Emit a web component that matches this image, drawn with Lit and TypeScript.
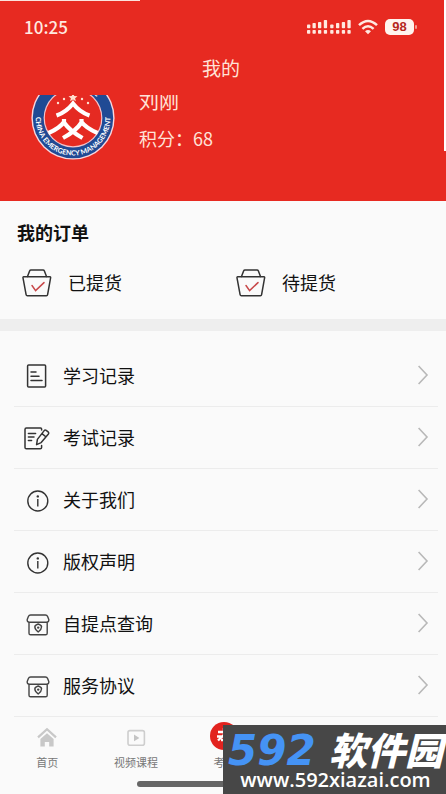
import { LitElement, html, css, svg } from "lit";
import { customElement } from "lit/decorators.js";

const basket = svg`<svg class="basket" viewBox="0 0 30 30" aria-hidden="true">
  <g fill="none" stroke="#333" stroke-width="1.5" stroke-linejoin="round" stroke-linecap="round">
    <path d="M5.5 8.5 L7.6 3 Q8 2 9 2 H21 Q22 2 22.4 3 L24.5 8.5"/>
    <path d="M1.6 8.8 H28 Q28.8 8.8 28.6 9.8 L25.6 26.6 Q25.4 27.8 24.4 27.8 H5.4 Q4.3 27.8 4.1 26.6 L1 9.8 Q.9 8.8 1.6 8.8Z"/>
  </g>
  <path d="M10 17.5 L13.6 22.6 L22 14.6" fill="none" stroke="#c8484a" stroke-width="1.5" stroke-linecap="round"/>
</svg>`;

const icons = {
  doc: svg`<svg class="icon" viewBox="0 0 28 28" aria-hidden="true"><g fill="none" stroke="#333" stroke-width="1.5" stroke-linecap="round" stroke-linejoin="round">
    <rect x="3.6" y="3" width="18" height="22" rx="1"/><path d="M7 10H12M7 14.2H15M7 18.6H18"/></g></svg>`,
  exam: svg`<svg class="icon" viewBox="0 0 28 28" aria-hidden="true"><g fill="none" stroke="#333" stroke-width="1.5" stroke-linecap="round" stroke-linejoin="round">
    <path d="M17.6 6 V5 Q17.6 4 16.6 4 H2.4 Q1 4 1 5.4 V23.4 Q1 24.8 2.4 24.8 H16.2 Q17.6 24.8 17.6 23.4 V21.6"/>
    <path d="M4.4 9.4H11.6M4.4 13H10M4.4 16.4H7.6"/>
    <path d="M12.6 20.6 L13.4 15.4 L20.2 6.6 Q21 5.6 22.2 6.4 L24.4 8.2 Q25.2 9 24.4 10 L17.2 18.6 Z M18 9.6 L21.8 12.8"/></g></svg>`,
  info: svg`<svg class="icon" viewBox="0 0 28 28" aria-hidden="true"><g fill="none" stroke="#333" stroke-width="1.4">
    <circle cx="13.8" cy="15" r="10"/><path d="M13.8 13V20.4"/></g><circle cx="13.8" cy="10.4" r="1.2" fill="#333"/></svg>`,
  shop: svg`<svg class="icon" viewBox="0 0 28 28" aria-hidden="true"><g fill="none" stroke="#444" stroke-width="1.4" stroke-linejoin="round">
    <path d="M6.6 5 H21.4 Q23 5 23.6 6.6 L24.8 9.6 Q25 12.2 22.6 12.2 H5.4 Q3 12.2 3.2 9.6 L4.4 6.6 Q5 5 6.6 5Z"/>
    <path d="M5 12.2 V23.2 Q5 24.8 6.6 24.8 H21.6 Q23.2 24.8 23.2 23.2 V12.2"/>
    <path d="M14.2 22 Q10.8 19.4 10.8 16.8 Q11 15 14.2 14 Q17.4 15 17.6 16.8 Q17.6 19.4 14.2 22Z"/></g><circle cx="14.2" cy="17.6" r="1.2" fill="#444"/></svg>`,
};

const rows: { label: string; icon: keyof typeof icons }[] = [
  { label: "学习记录", icon: "doc" },
  { label: "考试记录", icon: "exam" },
  { label: "关于我们", icon: "info" },
  { label: "版权声明", icon: "info" },
  { label: "自提点查询", icon: "shop" },
  { label: "服务协议", icon: "shop" },
];

@customElement("status-bar")
class StatusBar extends LitElement {
  static styles = css`
    :host { display: flex; align-items: center; justify-content: space-between; height: 20px; padding: 17px 32px 0 24px; color: #ffe9e0; }
    .time { font-size: 17px; line-height: 20px; font-weight: 500; }
    .right { display: flex; align-items: center; gap: 7px; }
    .signal { width: 44px; height: 16px; }
    .wifi { width: 20px; height: 16px; }
    .battery { position: relative; width: 29px; height: 16px; border-radius: 5px; background: #fff4ee; color: #b5271c;
      font: bold 13px/16px "Liberation Sans", sans-serif; text-align: center; }
    .battery::after { content: ""; position: absolute; right: -3px; top: 6px; width: 2px; height: 4px; border-radius: 1px; background: #f39a8e; }
  `;
  render() {
    const tops = [5.4, 4, 3, 1, 5.4, 4, 3, 1];
    const xs = [0, 5.5, 11, 16.8, 23.2, 29, 34.8, 40.4];
    return html`
      <span class="time">10:25</span>
      <div class="right">
        <svg class="signal" viewBox="0 0 44 16" fill="#ffe9e0" aria-hidden="true">
          ${xs.map((x, i) => svg`<rect x=${x} y=${tops[i]} width="3.3" height=${9.2 - tops[i]} rx=".8"/><rect x=${x} y="11" width="3.3" height="3.8" rx=".8"/>`)}
        </svg>
        <svg class="wifi" viewBox="0 0 20 16" fill="none" stroke="#ffe9e0" stroke-width="2.5" aria-hidden="true">
          <path d="M1 6.2 Q10 -2.2 19 6.2"/><path d="M4.4 9.8 Q10 4.6 15.6 9.8"/><path d="M7 12.2 Q10 9.6 13 12.2 L10 15.2Z" fill="#ffe9e0" stroke="none"/>
        </svg>
        <span class="battery">98</span>
      </div>`;
  }
}

@customElement("user-badge")
class UserBadge extends LitElement {
  static styles = css`
    :host { display: block; width: 84px; height: 65px; }
    .badge { display: block; width: 100%; height: 100%; }
    .latin { font: bold 7px "Lato", sans-serif; fill: #fff; }
    .han { font: bold 9px "Noto Sans CJK SC", sans-serif; fill: #fff; }
  `;
  render() {
    return html`<svg class="badge" viewBox="0 19 84 65" role="img" aria-label="CHINA EMERGENCY MANAGEMENT">
      <circle cx="42" cy="42" r="41.6" fill="#f7d8e0"/>
      <circle cx="42" cy="42" r="40.2" fill="#204a94"/>
      <circle cx="42" cy="42" r="29.4" fill="#f3c4cc"/>
      <circle cx="42" cy="42" r="28.2" fill="#e52a22"/>
      <path id="low" d="M5.4 35 A37.3 37.3 0 1 0 78.6 35" fill="none"/>
      <path id="high" d="M10 42 A32 32 0 0 1 74 42" fill="none"/>
      <text class="latin" text-anchor="middle"><textPath href="#low" startOffset="50%">CHINA EMERGENCY MANAGEMENT</textPath></text>
      <text class="han" text-anchor="middle"><textPath href="#high" startOffset="50%">中国应急管理</textPath></text>
      <g fill="#ffe0d0">
        <path d="M42 17 l1.3 3 3.2 .2 -2.4 2 .8 3 -2.9-1.7 -2.9 1.7 .8-3 -2.4-2 3.2-.2z"/>
        <circle cx="33" cy="23" r="1.2"/><circle cx="51" cy="23" r="1.2"/><circle cx="27" cy="27" r="1.2"/><circle cx="57" cy="27" r="1.2"/>
      </g>
      <g fill="none" stroke="#fff" stroke-width="4.2">
        <path d="M25.5 39.5 Q35.5 36 42 27.5 Q48.5 36 58.5 39.5"/>
        <path d="M33 43 V46 Q29 52 17.5 57 M33 46.5 Q39 55 51.5 62"/>
        <path d="M50.5 43 V46.5 Q45 55 32 62 M50.5 46 Q55 52 66.5 57"/>
      </g>
    </svg>`;
  }
}

@customElement("site-mark")
class SiteMark extends LitElement {
  static styles = css`
    :host { display: flex; flex-direction: column; align-items: center; box-sizing: border-box; height: 69px; padding: 8px 3px 0 5px; background: #474747; color: #fff; }
    .name { display: flex; align-items: center; justify-content: space-between; width: 100%; height: 36px; }
    .num { font: italic bold 42px/36px "DejaVu Sans", sans-serif; color: #4593f5; }
    .han { padding-bottom: 4px; font: italic 900 38px/32px "Noto Sans CJK SC", sans-serif; }
    .url { font: 600 20px/22px "Open Sans", "Noto Sans", sans-serif; }
  `;
  render() {
    return html`<div class="name"><span class="num">592</span><span class="han">软件园</span></div><span class="url">www.592xiazai.com</span>`;
  }
}

@customElement("app-root")
class AppRoot extends LitElement {
  static styles = css`
    :host { display: flex; flex-direction: column; position: relative; min-height: 100vh; background: #fafafa; color: #111;
      font-family: "Noto Sans CJK SC", sans-serif; font-size: 18px; line-height: 26px; overflow: hidden; }
    a { color: inherit; text-decoration: none; }
    .head { background:
        linear-gradient(#fbe3dc, #fbe3dc) 0 0 / 140px 1px no-repeat,
        linear-gradient(#fff, #fff) 100% 0 / 2px 151px no-repeat, #e72a21;
      color: #ffe3d8; padding-bottom: 41px; }
    .title { margin: 18px 0 0; padding-right: 4px; font-size: 19px; font-weight: 400; line-height: 26px; text-align: center; }
    .profile { display: flex; gap: 24px; margin-top: 14px; padding-left: 31px; overflow: hidden; height: 65px; }
    .person { display: flex; flex-direction: column; }
    .name { display: flex; align-items: flex-end; height: 16px; overflow: hidden; font-size: 20px; line-height: 20px; }
    .points { margin-top: 14px; }
    .orders { padding: 18px 0 20px 17px; border-bottom: 12px solid #eee; }
    .heading { margin: 0; font-size: 18px; line-height: 26px; font-weight: 700; }
    .pair { display: grid; grid-template-columns: 1fr 1fr; column-gap: 4px; margin-top: 22px; padding-left: 5px; }
    .order { display: flex; align-items: center; gap: 16px; height: 32px; }
    .order span, .label { padding-bottom: 2px; }
    .basket { width: 30px; height: 30px; }
    .list { list-style: none; margin: 0; padding: 14px 8px 0 14px; }
    .row { display: flex; align-items: center; gap: 11px; box-sizing: border-box; height: 62px; padding: 0 9px 0 10px; border-bottom: 1px solid #ececec; }
    .icon { width: 28px; height: 28px; }
    .label { flex: 1; }
    .chevron { width: 12px; height: 20px; padding-bottom: 2px; }
    .tabs { display: grid; grid-template-columns: repeat(5, 1fr); margin-top: auto; padding: 5px 0 24px 3px; font-size: 11px; line-height: 16px; color: #777; }
    .tab { display: flex; flex-direction: column; align-items: center; gap: 4px; }
    .glyph { width: 28px; height: 28px; }
    .indicator { position: absolute; left: 50%; bottom: 7px; width: 172px; height: 6px; margin-left: -86px; border-radius: 3px; background: #666; }
    .mark { position: absolute; right: 0; bottom: 0; width: 50%; }
  `;
  render() {
    return html`
      <header class="head">
        <status-bar></status-bar>
        <h1 class="title">我的</h1>
        <div class="profile">
          <user-badge></user-badge>
          <div class="person"><div class="name">刘刚</div><div class="points">积分：68</div></div>
        </div>
      </header>
      <section class="orders">
        <h2 class="heading">我的订单</h2>
        <div class="pair">
          <a class="order" href="#picked">${basket}<span>已提货</span></a>
          <a class="order" href="#waiting">${basket}<span>待提货</span></a>
        </div>
      </section>
      <ul class="list">
        ${rows.map((r) => html`<li><a class="row" href="#more">${icons[r.icon]}<span class="label">${r.label}</span>
          <svg class="chevron" viewBox="0 0 12 20" fill="none" stroke="#b8b8b8" stroke-width="1.6" aria-hidden="true"><path d="M1.6 1 L10 10 L1.6 19"/></svg></a></li>`)}
      </ul>
      <nav class="tabs">
        <a class="tab" href="#home"><svg class="glyph" viewBox="0 0 28 28" aria-hidden="true">
          <path d="M5 15.4 L14 7.2 L23 15.4" fill="none" stroke="#c8c8c8" stroke-width="2.2"/>
          <path d="M14 11.2 L20.6 17 V24.6 H16.2 V20 H11.8 V24.6 H7.4 V17Z" fill="#c8c8c8"/></svg>首页</a>
        <a class="tab" href="#video"><svg class="glyph" viewBox="0 0 28 28" aria-hidden="true">
          <rect x="6" y="8.6" width="16.4" height="14.6" rx="2" fill="none" stroke="#cecece" stroke-width="1.6"/>
          <path d="M12 12.6 L17.4 15.9 L12 19.2Z" fill="#c4c4c4"/></svg>视频课程</a>
        <a class="tab" href="#exam"><svg class="glyph" viewBox="0 0 28 28" aria-hidden="true">
          <circle cx="14" cy="14" r="14" fill="#e2231f"/>
          <path d="M8 10 H20 M7 14.5 H21 M14 6 V14 M20 7 L8 18.5 M11 18 H18 L17 22" fill="none" stroke="#fff" stroke-width="2.4"/></svg>考试</a>
      </nav>
      <div class="indicator"></div>
      <site-mark class="mark"></site-mark>`;
  }
}
